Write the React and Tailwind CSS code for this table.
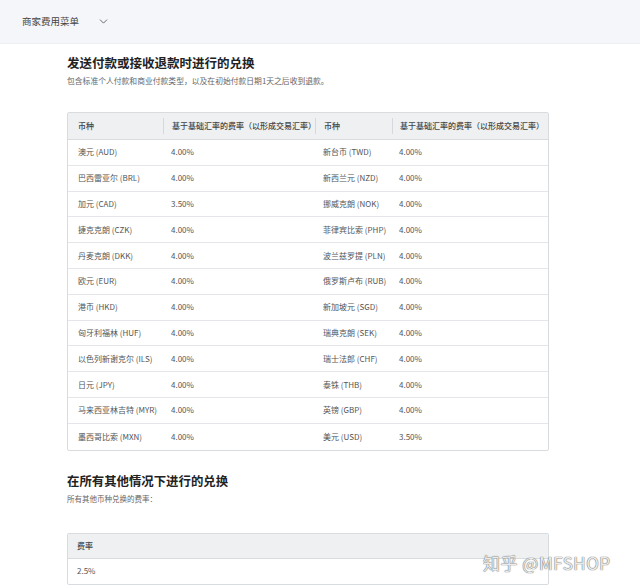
import { ChevronDown } from 'lucide-react'

const rows = [
    ['澳元 (AUD)', '4.00%', '新台币 (TWD)', '4.00%'],
    ['巴西雷亚尔 (BRL)', '4.00%', '新西兰元 (NZD)', '4.00%'],
    ['加元 (CAD)', '3.50%', '挪威克朗 (NOK)', '4.00%'],
    ['捷克克朗 (CZK)', '4.00%', '菲律宾比索 (PHP)', '4.00%'],
    ['丹麦克朗 (DKK)', '4.00%', '波兰兹罗提 (PLN)', '4.00%'],
    ['欧元 (EUR)', '4.00%', '俄罗斯卢布 (RUB)', '4.00%'],
    ['港币 (HKD)', '4.00%', '新加坡元 (SGD)', '4.00%'],
    ['匈牙利福林 (HUF)', '4.00%', '瑞典克朗 (SEK)', '4.00%'],
    ['以色列新谢克尔 (ILS)', '4.00%', '瑞士法郎 (CHF)', '4.00%'],
    ['日元 (JPY)', '4.00%', '泰铢 (THB)', '4.00%'],
    ['马来西亚林吉特 (MYR)', '4.00%', '英镑 (GBP)', '4.00%'],
    ['墨西哥比索 (MXN)', '4.00%', '美元 (USD)', '3.50%'],
]

const cols = 'grid grid-cols-[95px_152px_77px_1fr]'

const App = () => {
    return (
        <div className="relative w-[640px] h-[588px] overflow-hidden bg-white text-[#555] font-['Noto_Sans_CJK_SC','Noto_Sans',sans-serif]">
            {/* top bar */}
            <div className="h-[44px] bg-[#f4f6f9] border-b border-[#eceff3] flex items-center pl-[22px] gap-[18px]">
                <span className="text-[9.5px] text-[#444]">商家费用菜单</span>
                <ChevronDown size={13} strokeWidth={1.6} className="text-[#555]" />
            </div>

            <div className="pl-[67px] w-[549px]">
                <h1 className="mt-[10px] text-[12.5px] font-bold text-[#222] leading-[18px]">发送付款或接收退款时进行的兑换</h1>
                <p className="mt-[3px] text-[7.8px] text-[#666] leading-[12px]">包含标准个人付款和商业付款类型，以及在初始付款日期1天之后收到退款。</p>

                <div className="mt-[25px] border border-[#d9dcdf] rounded-[2px] text-[8px]">
                    <div className={`${cols} h-[27px] bg-[#eef0f2] font-medium text-[#444] border-b border-[#d9dcdf]`}>
                        <div className="flex items-center pl-[10px]">币种</div>
                        <div className="flex items-center pl-[8px] border-l border-[#d5d8dc] my-[5px]">基于基础汇率的费率（以形成交易汇率）</div>
                        <div className="flex items-center pl-[8px] border-l border-[#d5d8dc] my-[5px]">币种</div>
                        <div className="flex items-center pl-[7px] border-l border-[#d5d8dc] my-[5px]">基于基础汇率的费率（以形成交易汇率）</div>
                    </div>
                    {rows.map((r, i) => (
                        <div key={i} className={`${cols} h-[25.8px] ${i < rows.length - 1 ? 'border-b border-[#e4e6e9]' : ''}`}>
                            <div className="flex items-center pl-[10px]">{r[0]}</div>
                            <div className="flex items-center pl-[8px]">{r[1]}</div>
                            <div className="flex items-center pl-[8px]">{r[2]}</div>
                            <div className="flex items-center pl-[7px]">{r[3]}</div>
                        </div>
                    ))}
                </div>

                <h2 className="mt-[21px] text-[12.4px] font-bold text-[#222] leading-[18px]">在所有其他情况下进行的兑换</h2>
                <p className="mt-[3px] text-[7.5px] text-[#666] leading-[12px]">所有其他币种兑换的费率：</p>

                <div className="mt-[28px] border border-[#d9dcdf] rounded-[2px] text-[8px]">
                    <div className="h-[25px] bg-[#eef0f2] font-medium text-[#444] border-b border-[#d9dcdf] flex items-center pl-[9px]">费率</div>
                    <div className="h-[25px] flex items-center pl-[9px]">2.5%</div>
                </div>
            </div>

            {/* watermark */}
            <div className="absolute left-[483px] top-[550px] text-[17px] text-[#ececec] [text-shadow:0_0_1px_#666,0_0_1px_#666] tracking-[0.5px]">
                知乎 @MFSHOP
            </div>
        </div>
    )
}

export default App
